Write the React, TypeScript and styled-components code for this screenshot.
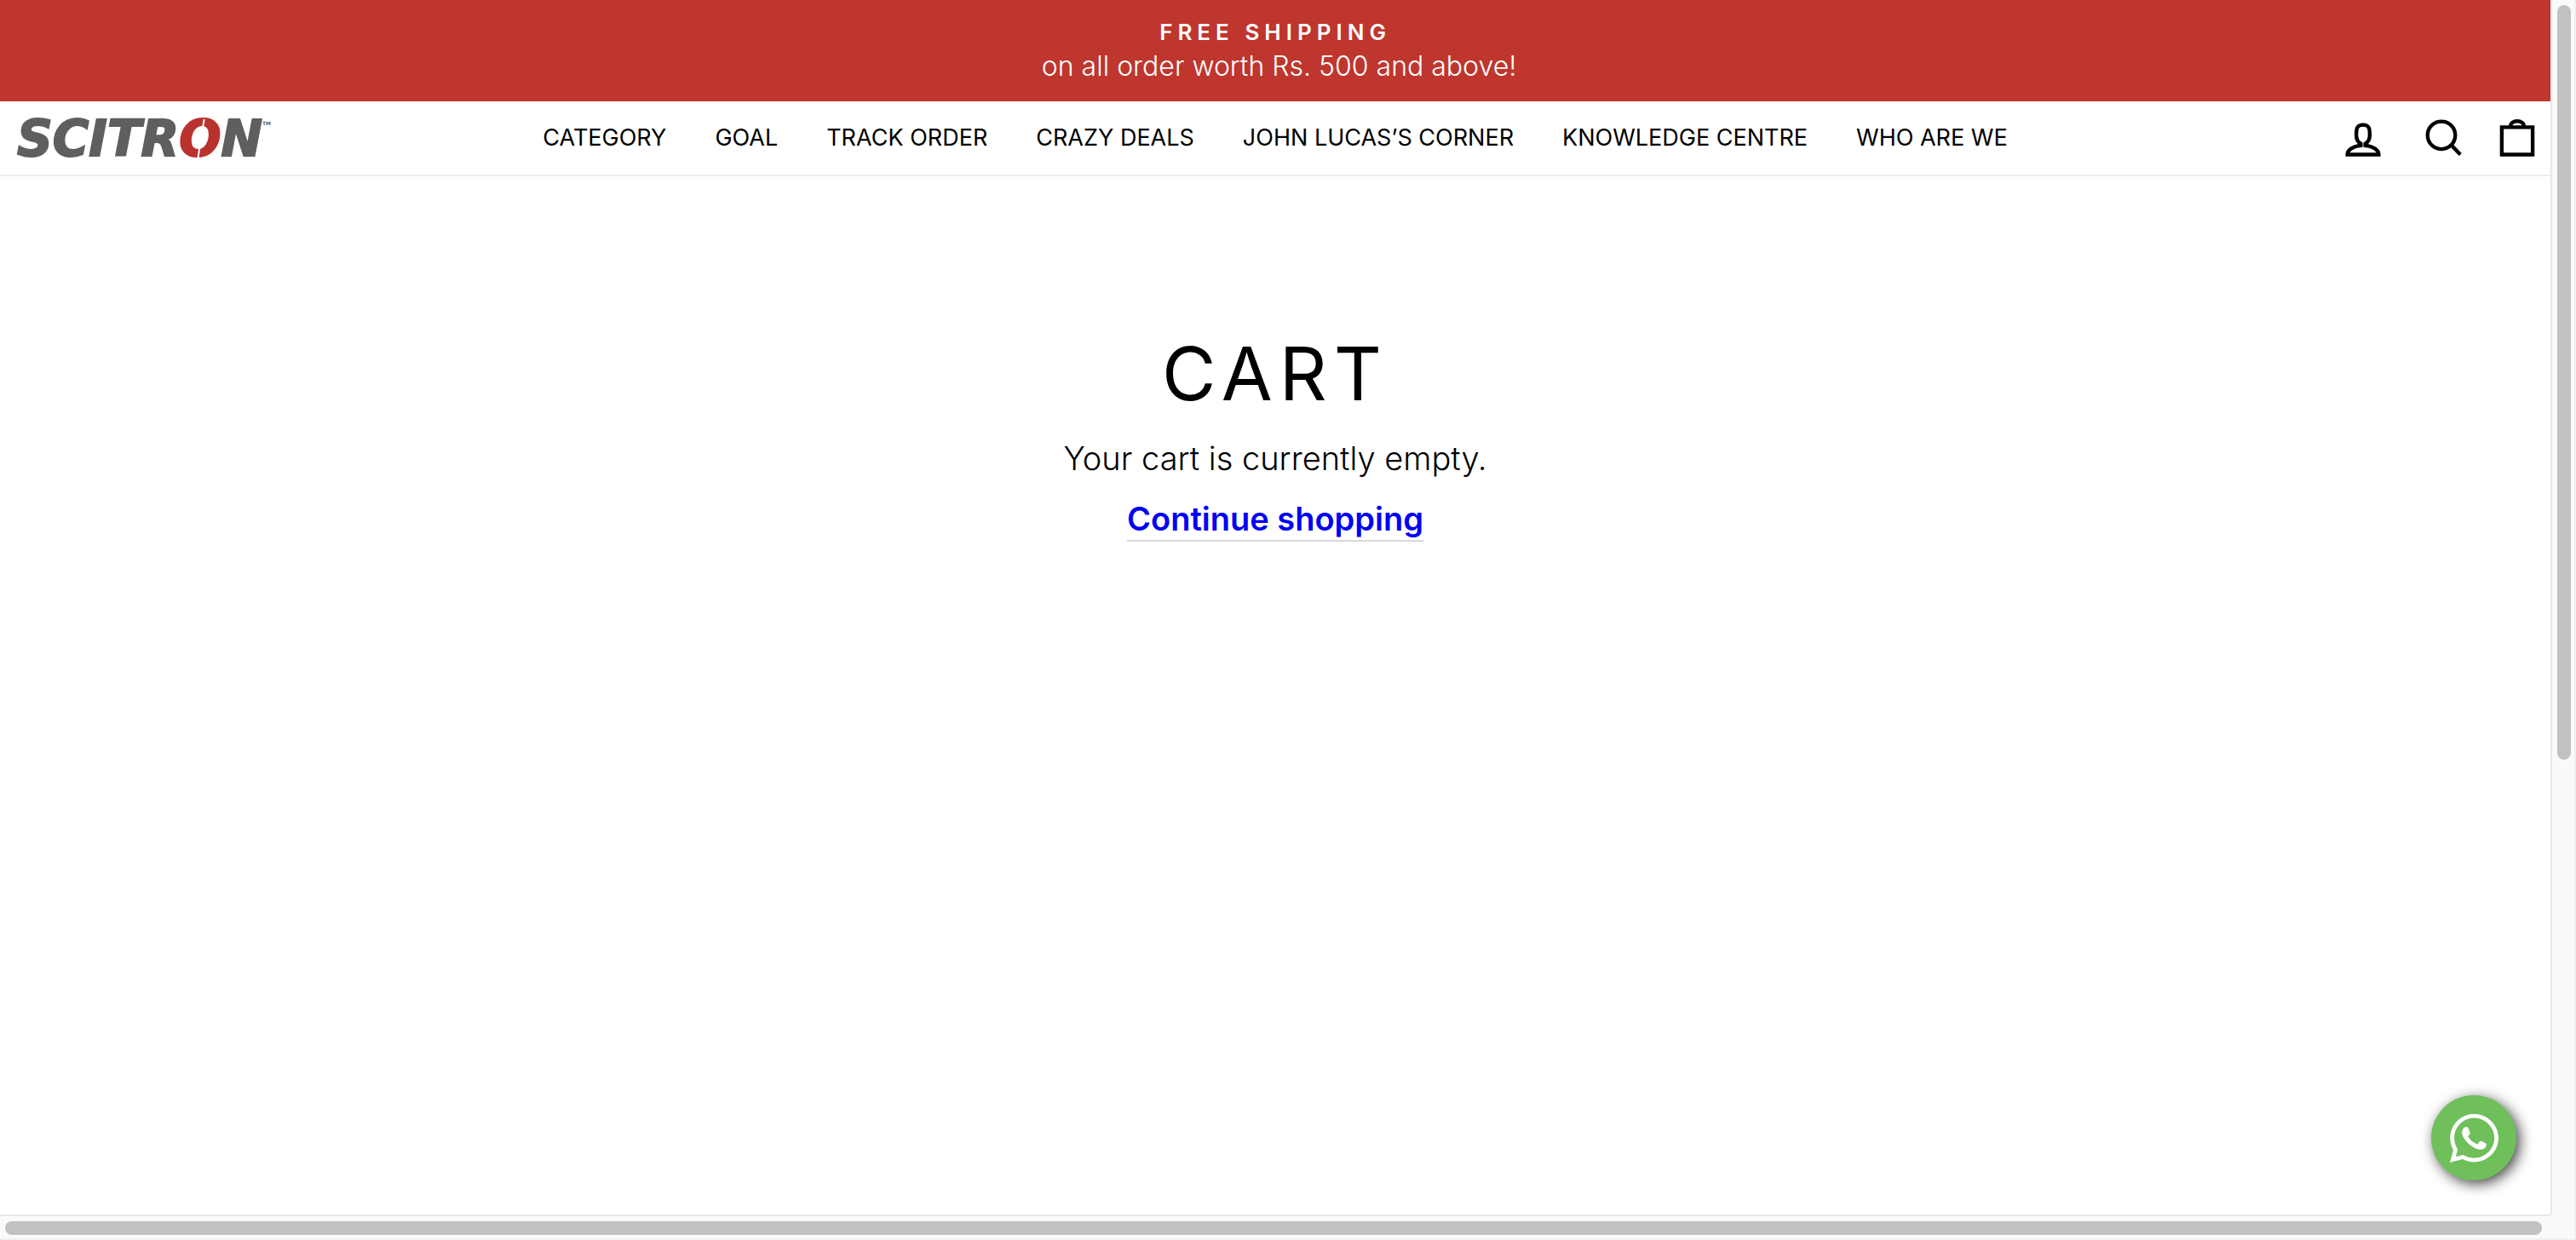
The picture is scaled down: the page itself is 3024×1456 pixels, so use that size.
import React from "react";
import styled, { createGlobalStyle } from "styled-components";
import { FaWhatsapp } from "react-icons/fa";

const GlobalStyle = createGlobalStyle`
  * { box-sizing: border-box; }
  body { margin: 0; background: #fff; color: #000; font-family: Inter, "Liberation Sans", sans-serif; overflow: hidden; }
  a { color: inherit; text-decoration: none; }
`;

const Shell = styled.div`
  display: grid;
  grid-template: minmax(0, 1fr) 30px / minmax(0, 1fr) 30px;
  height: 100vh;
  background: #fafafa;
`;

const Page = styled.div`
  position: relative;
  background: #fff;
`;

const Announcement = styled.section`
  display: flex;
  flex-direction: column;
  align-items: center;
  height: 119px;
  padding-top: 18px;
  background: #be362e;
  color: #fff;
`;

const AnnouncementTitle = styled.strong`
  font-size: 26px;
  line-height: 40px;
  font-weight: 600;
  letter-spacing: 6px;
`;

const AnnouncementText = styled.span`
  font-size: 32px;
  line-height: 40px;
  font-weight: 300;
`;

const Header = styled.header`
  display: grid;
  grid-template-columns: 1fr auto 1fr;
  align-items: center;
  height: 88px;
  padding: 0 11px;
  border-bottom: 2px solid #eee;
`;

const Logo = styled.a`
  display: flex;
  justify-self: start;
  padding: 2px 0 0 9px;
  color: #5f5f5f;
  font-family: "DejaVu Sans", sans-serif;
  font-size: 58px;
  line-height: 84px;
  font-weight: 700;
  font-style: italic;
  -webkit-text-stroke: 2px currentColor;
`;

const LogoRed = styled.span`
  position: relative;
  color: #b9322e;

  &::after {
    content: "";
    position: absolute;
    top: 19px;
    bottom: 19px;
    left: 50%;
    width: 2px;
    background: #fff;
    transform: skewX(-9deg);
  }
`;

const Trademark = styled.small`
  padding-top: 20px;
  font-size: 6px;
  line-height: 8px;
  font-style: normal;
  -webkit-text-stroke: 0;
`;

const Nav = styled.nav`
  display: flex;
  gap: 57px;
  font-size: 27px;
  line-height: 40px;
`;

const Tools = styled.div`
  display: flex;
  justify-self: end;
  gap: 30px;
  padding-top: 4px;
`;

const ToolLink = styled.a<{ $spaced?: boolean }>`
  display: flex;
  margin-right: ${(p) => (p.$spaced ? "9px" : "0")};

  svg {
    width: 56px;
    height: 56px;
    fill: none;
    stroke: #000;
    stroke-width: 5;
  }
`;

const Main = styled.main`
  display: flex;
  flex-direction: column;
  align-items: center;
  padding-top: 172px;
`;

const Title = styled.h1`
  margin: 0;
  font-size: 87px;
  line-height: 120px;
  font-weight: 400;
  letter-spacing: 8px;
`;

const Message = styled.p`
  margin: 4px 0 11px;
  font-size: 38px;
  line-height: 70px;
  font-weight: 300;
`;

const ContinueLink = styled.a`
  border-bottom: 2px solid #d8d8d8;
  color: #0000f5;
  font-size: 38px;
  line-height: 50px;
  font-weight: 600;
`;

const WhatsAppLink = styled.a`
  position: absolute;
  right: 40px;
  bottom: 40px;
  display: grid;
  place-items: center;
  width: 100px;
  height: 100px;
  border-radius: 50%;
  background: #6fbf5a;
  color: #fff;
  box-shadow: 4px 4px 16px #444;

  svg {
    width: 57px;
    height: 65px;
  }
`;

const VerticalTrack = styled.div`
  padding: 6px 4px 0 6px;
  border: solid #e8e8e8;
  border-width: 0 2px;
  border-right-color: #f0f0f0;
`;

const HorizontalTrack = styled.div`
  padding: 6px 10px 0 6px;
  border: solid #e8e8e8;
  border-width: 2px 0;
  border-bottom-color: #f0f0f0;
`;

const Corner = styled.div`
  border: solid #f0f0f0;
  border-width: 0 2px 2px 0;
`;

const Thumb = styled.div<{ $length: string; $vertical?: boolean }>`
  width: ${(p) => (p.$vertical ? "16px" : p.$length)};
  height: ${(p) => (p.$vertical ? p.$length : "16px")};
  border-radius: 8px;
  background: #c1c1c1;
`;

const links = [
  "CATEGORY",
  "GOAL",
  "TRACK ORDER",
  "CRAZY DEALS",
  "JOHN LUCAS’S CORNER",
  "KNOWLEDGE CENTRE",
  "WHO ARE WE",
];

export default function App() {
  return (
    <Shell>
      <GlobalStyle />
      <Page>
        <Announcement>
          <AnnouncementTitle>FREE SHIPPING</AnnouncementTitle>
          <AnnouncementText>&nbsp;on all order worth Rs. 500 and above!</AnnouncementText>
        </Announcement>
        <Header>
          <Logo href="#">
            <span>SCITR</span>
            <LogoRed>O</LogoRed>
            <span>N</span>
            <Trademark>TM</Trademark>
          </Logo>
          <Nav>
            {links.map((label) => (
              <a key={label} href="#">{label}</a>
            ))}
          </Nav>
          <Tools>
            <ToolLink href="#" aria-label="Log in" $spaced>
              <svg viewBox="0 0 64 64">
                <path d="M35 39.84v-2.53c3.3-1.91 6-6.66 6-11.41 0-7.63 0-13.82-9-13.82s-9 6.19-9 13.82c0 4.75 2.7 9.51 6 11.41v2.53c-10.18.85-18 6-18 12.16h42c0-6.19-7.82-11.31-18-12.16z" />
              </svg>
            </ToolLink>
            <ToolLink href="#" aria-label="Search">
              <svg viewBox="0 0 64 64">
                <path d="M47.16 26.08A18.58 18.58 0 1 1 28.58 7.5a18.58 18.58 0 0 1 18.58 18.58zM54 52L41.94 39.5" />
              </svg>
            </ToolLink>
            <ToolLink href="#" aria-label="Cart">
              <svg viewBox="0 0 64 64">
                <path d="M11.3 15.3h41.4v36.7H11.3zM22.8 15c0-5 4-7.8 9.2-7.8s9.2 2.8 9.2 7.8" />
              </svg>
            </ToolLink>
          </Tools>
        </Header>
        <Main>
          <Title>CART</Title>
          <Message>Your cart is currently empty.</Message>
          <ContinueLink href="#">Continue shopping</ContinueLink>
        </Main>
        <WhatsAppLink href="#" aria-label="Chat on WhatsApp">
          <FaWhatsapp />
        </WhatsAppLink>
      </Page>
      <VerticalTrack>
        <Thumb $vertical $length="62.4%" />
      </VerticalTrack>
      <HorizontalTrack>
        <Thumb $length="100%" />
      </HorizontalTrack>
      <Corner />
    </Shell>
  );
}
